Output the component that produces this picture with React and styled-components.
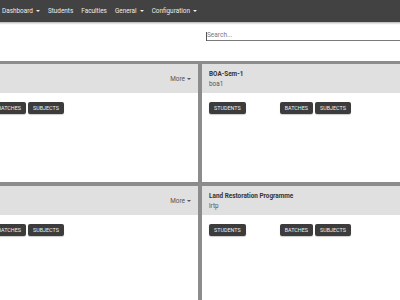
import React from 'react'
import styled, { createGlobalStyle } from 'styled-components'

const GlobalStyle = createGlobalStyle`
    html, body {
        margin:0;
        padding:0;
        background:#ffffff;
        overflow:hidden;
        font-family: Roboto, "Liberation Sans", Arial, sans-serif;
        -webkit-font-smoothing:antialiased;
    }
`

const Page = styled.div`
    width:570px;
    margin-left:-85px;
`

const Navbar = styled.nav`
    display:flex;
    align-items:center;
    height:22px;
    background:#424242;
    box-shadow:0 1px 2px rgba(0,0,0,0.35);
    position:relative;
    z-index:2;
`

const Brand = styled.div`
    width:83px;
`

const NavItem = styled.div`
    display:flex;
    align-items:center;
    padding:0 4px;
    color:#ececec;
    font-size:6.4px;
    white-space:nowrap;
`

const Caret = styled.span`
    display:inline-block;
    margin-left:3px;
    width:0;
    height:0;
    border-left:2px solid transparent;
    border-right:2px solid transparent;
    border-top:2px solid #ececec;
`

const SearchRow = styled.div`
    display:flex;
    height:39px;
    padding-left:291px;
    box-sizing:border-box;
    padding-top:9px;
`

const SearchWrap = styled.div`
    position:relative;
    width:279px;
    height:10px;
`

const SearchInput = styled.input`
    display:block;
    width:100%;
    height:10px;
    box-sizing:border-box;
    border:none;
    border-bottom:1px solid #7a7a7a;
    outline:none;
    padding:0 0 1px 1px;
    font-family: Roboto, "Liberation Sans", Arial, sans-serif;
    font-size:6.5px;
    color:#333;
    background:transparent;
    &::placeholder { color:#7a7a7a; }
`

const TextCaret = styled.span`
    position:absolute;
    left:0;
    top:1px;
    width:1px;
    height:9px;
    background:#555;
`

const Grid = styled.div`
    display:grid;
    grid-template-columns:283px 283px;
    gap:4px;
    padding-top:3px;
    background:#8c8c8c;
`

const Card = styled.div`
    display:flex;
    flex-direction:column;
    background:#ffffff;
    height:${({last}) => (last ? '120px' : '118px')};
`

const CardHeader = styled.div`
    display:flex;
    align-items:center;
    justify-content:space-between;
    height:29px;
    box-sizing:border-box;
    padding:1px 7px 0;
    background:#e0e0e0;
`

const Titles = styled.div`
    display:flex;
    flex-direction:column;
`

const Title = styled.div`
    font-size:6.4px;
    font-weight:bold;
    color:#333;
    line-height:10px;
`

const Sub = styled.div`
    font-size:6.4px;
    color:#555;
    line-height:10px;
`

const More = styled.div`
    display:flex;
    align-items:center;
    font-size:6.4px;
    color:#555;
`

const MoreCaret = styled(Caret)`
    border-top-color:#555;
    margin-left:2px;
`

const CardBody = styled.div`
    display:flex;
    padding:9px 7px;
`

const Group = styled.div`
    display:flex;
    gap:2px;
    margin-left:${({offset}) => offset || 0}px;
`

const Btn = styled.div`
    display:flex;
    align-items:center;
    justify-content:center;
    height:12px;
    padding:0 5px;
    background:#3c3c3c;
    color:#eeeeee;
    border-radius:2px;
    font-size:5.4px;
    text-transform:uppercase;
    box-shadow:0 1px 1px rgba(0,0,0,0.2);
`

const programmes = [
    { title: 'BBA-Sem-1', code: 'bba1' },
    { title: 'BOA-Sem-1', code: 'boa1' },
    { title: 'BCA-Sem-1', code: 'bca1' },
    { title: 'Land Restoration Programme', code: 'lrtp' },
]

const navItems = [
    { label: 'Dashboard', drop: true },
    { label: 'Students' },
    { label: 'Faculties' },
    { label: 'General', drop: true },
    { label: 'Configuration', drop: true },
]

const App = () => {
    return (
        <Page>
            <GlobalStyle />
            <Navbar>
                <Brand />
                {navItems.map((item) => (
                    <NavItem key={item.label}>
                        {item.label}
                        {item.drop && <Caret />}
                    </NavItem>
                ))}
            </Navbar>
            <SearchRow>
                <SearchWrap>
                    <SearchInput placeholder="Search..." />
                    <TextCaret />
                </SearchWrap>
            </SearchRow>
            <Grid>
                {programmes.map((p, i) => (
                    <Card key={p.code} last={i > 1}>
                        <CardHeader>
                            <Titles>
                                <Title>{p.title}</Title>
                                <Sub>{p.code}</Sub>
                            </Titles>
                            <More>More<MoreCaret /></More>
                        </CardHeader>
                        <CardBody>
                            <Group>
                                <Btn>Students</Btn>
                            </Group>
                            <Group offset={34}>
                                <Btn>Batches</Btn>
                                <Btn>Subjects</Btn>
                            </Group>
                        </CardBody>
                    </Card>
                ))}
            </Grid>
        </Page>
    )
}

export default App
